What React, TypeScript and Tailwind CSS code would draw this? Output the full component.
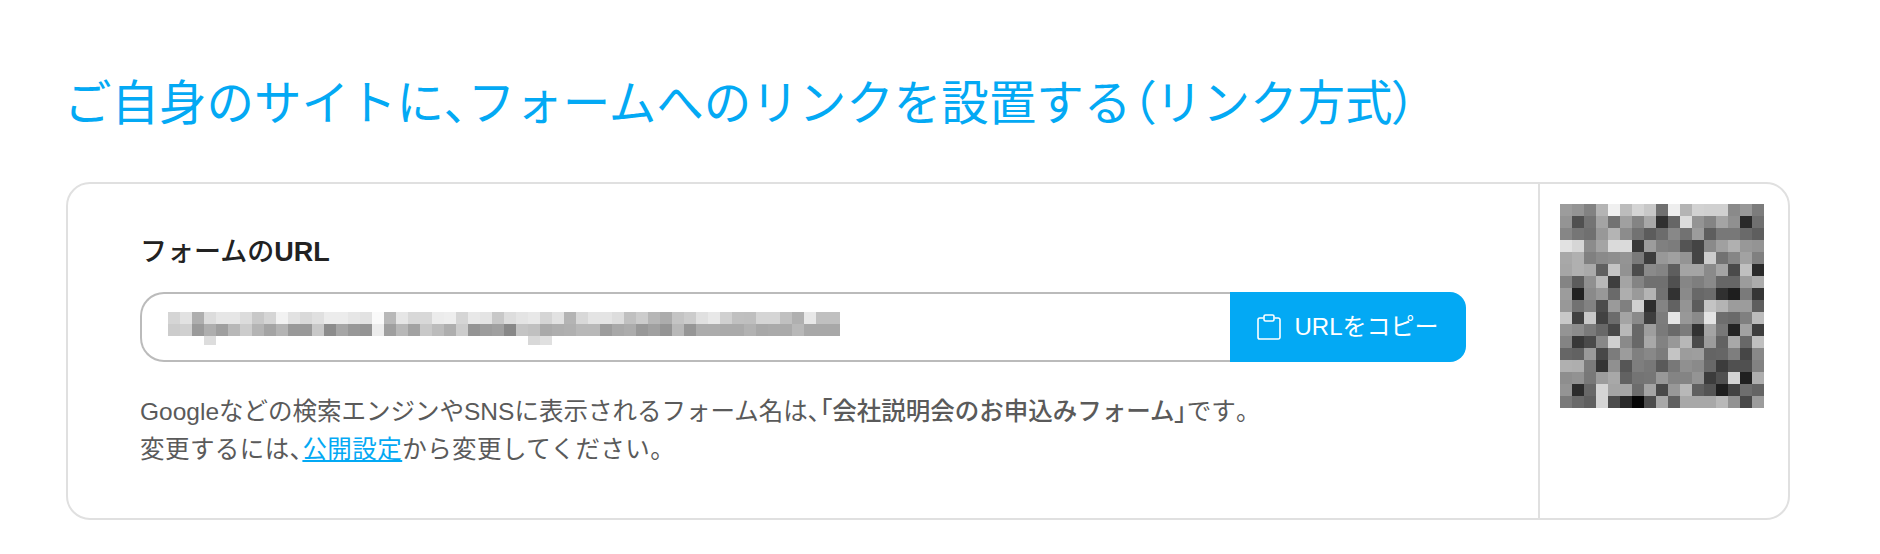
const fontStack = '[font-family:"Liberation_Sans","Noto_Sans_CJK_JP",sans-serif]';

const qrRows = [
  '9c,94,82,b4,f0,bc,d4,c8,70,ee,b4,d2,d0,d0,8a,98,7c',
  '94,50,74,a4,72,a0,84,a8,30,66,dc,94,84,a4,90,2a,70',
  '86,76,70,98,b4,8c,72,5c,6c,88,72,9c,5e,78,78,6a,5e',
  'e2,d6,8c,a4,da,da,38,9c,80,7c,54,44,8a,a0,b0,98,94',
  'a8,b0,80,8a,8e,94,7a,3c,98,a0,94,44,cc,72,86,a2,80',
  'a6,b0,aa,60,c4,92,4c,8a,84,5e,a4,a4,8a,a4,4a,c0,2a',
  '84,5c,90,b8,3e,a4,84,70,70,50,86,7e,8a,66,66,9c,ac',
  '9c,22,8a,98,6a,ae,9a,b4,72,32,8a,68,6c,30,1e,7a,36',
  '98,72,82,4c,9a,80,d0,2e,84,62,94,5c,c4,b4,9c,9c,5e',
  'c8,40,c8,42,6c,a4,8a,3e,7c,e4,98,8a,e4,6e,6a,80,bc',
  '94,8c,7a,68,48,b8,68,9e,7a,6a,7c,32,a4,78,24,a2,3e',
  '84,38,4a,88,d0,8a,68,a8,82,98,b8,4a,9c,62,a8,68,c0',
  '66,62,9a,48,7c,9c,80,88,7c,c4,9c,9e,64,66,7e,46,88',
  'b0,ae,7a,34,90,56,7e,78,5a,78,90,8a,68,3c,50,50,82',
  '8e,92,78,9c,a8,62,74,76,98,84,84,94,3c,50,d4,20,ae',
  '94,2c,68,d4,a4,a6,6c,a4,48,98,b8,60,54,1e,42,6e,64',
  '7a,6a,60,d4,4c,2a,06,4c,a8,60,a8,a8,a8,b8,92,48,9c',
];

const urlRows = [
  'd5,e2,ae,dc,e6,e6,dc,c8,d5,f2,e2,d9,e0,ec,ec,e6,e2,fa,b8,e6,d8,d8,ec,ee,d5,e8,e4,c8,dd,e4,e8,d5,e2,b4,d8,e4,e4,dd,c0,cc,b6,ac,c4,cc,e0,e8,d0,c0,bf,d5,d5,c0,b0,e8,c0,c0',
  'cc,d0,9a,ae,9f,b8,cc,b4,a4,b4,99,99,c8,8c,a6,98,94,ec,9f,b8,a2,c8,bc,ae,cc,94,9c,a0,88,c4,c0,aa,ae,b0,b8,b8,9c,a8,ac,98,a0,94,b8,96,ac,ac,aa,aa,b2,a8,aa,aa,b8,a8,a8,a8',
];

// blurred areas of the screenshot, one rect per cell
function Mosaic({ rows, cell, className }: { rows: string[]; cell: number; className?: string }) {
  const cols = rows[0].split(',').length;
  return (
    <svg width={cols * cell} height={rows.length * cell} shapeRendering="crispEdges" className={className}>
      {rows.map((row, y) =>
        row.split(',').map((v, x) => (
          <rect key={`${x}-${y}`} x={x * cell} y={y * cell} width={cell} height={cell} fill={`#${v}${v}${v}`} />
        )),
      )}
    </svg>
  );
}

function ClipboardIcon() {
  return (
    <svg width="24" height="26" viewBox="0 0 24 26" fill="none" stroke="currentColor" strokeWidth="1.6" className="shrink-0">
      <path d="M6.5 4H2.8A1.8 1.8 0 0 0 1 5.8v17.4A1.8 1.8 0 0 0 2.8 25h18.4a1.8 1.8 0 0 0 1.8-1.8V5.8A1.8 1.8 0 0 0 21.2 4h-3.7" />
      <rect x="7" y="1" width="10" height="6" rx="1.5" />
    </svg>
  );
}

// punctuation sits half-width in the original
function Tight({ children }: { children: string }) {
  return <span className="[font-feature-settings:'palt']">{children}</span>;
}

export default function App() {
  return (
    <div className={`min-h-[554px] bg-white pl-[66px] pr-[90px] pt-[72px] ${fontStack}`}>
      <h1 className="-ml-[2px] text-[47.5px] leading-[64px] font-normal text-[#03a9f4]">
        ご自身のサイトに<Tight>、</Tight>フォームへのリンクを設置する<Tight>（</Tight>リンク方式<Tight>）</Tight>
      </h1>

      <div className="mt-[46px] flex h-[338px] rounded-3xl border-2 border-[#e0e0e0]">
        <div className="flex-1 pl-[72px] pr-[72px] pt-[52px]">
          <h2 className="text-[27px] leading-8 font-medium text-[#222222]">
            フォームの<span className="font-bold">URL</span>
          </h2>

          <div className="mt-[24px] flex h-[70px]">
            <div className="flex flex-1 items-start rounded-l-3xl border-2 border-r-0 border-[#bbbbbb] pl-[26px] pt-[18px]">
              <div>
                <Mosaic rows={urlRows} cell={12} className="block" />
                <div className="flex h-[9px]">
                  <div className="ml-9 w-3 bg-[#dddddd]" />
                  <div className="ml-[312px] w-3 bg-[#d8d8d8]" />
                  <div className="w-3 bg-[#e0e0e0]" />
                </div>
              </div>
            </div>
            <button className="flex w-[236px] items-center justify-center gap-[13px] rounded-r-2xl bg-[#03a9f4] text-2xl text-white">
              <ClipboardIcon />
              URLをコピー
            </button>
          </div>

          <p className="mt-[31px] text-[24.5px] leading-[38px] text-[#5a5a5a]">
            Googleなどの検索エンジンやSNSに表示されるフォーム名は<Tight>、</Tight>
            <strong className="font-medium">
              <Tight>「</Tight>会社説明会のお申込みフォーム<Tight>」</Tight>
            </strong>
            です<Tight>。</Tight>
            <br />
            <span className="tracking-[0.45px]">
              変更するには<Tight>、</Tight>
              <a href="#" className="text-[#03a9f4] underline">
                公開設定
              </a>
              から変更してください。
            </span>
          </p>
        </div>

        <div className="w-[250px] border-l-2 border-[#e0e0e0] pl-[20px] pt-[20px]">
          <Mosaic rows={qrRows} cell={12} className="block" />
        </div>
      </div>
    </div>
  );
}
